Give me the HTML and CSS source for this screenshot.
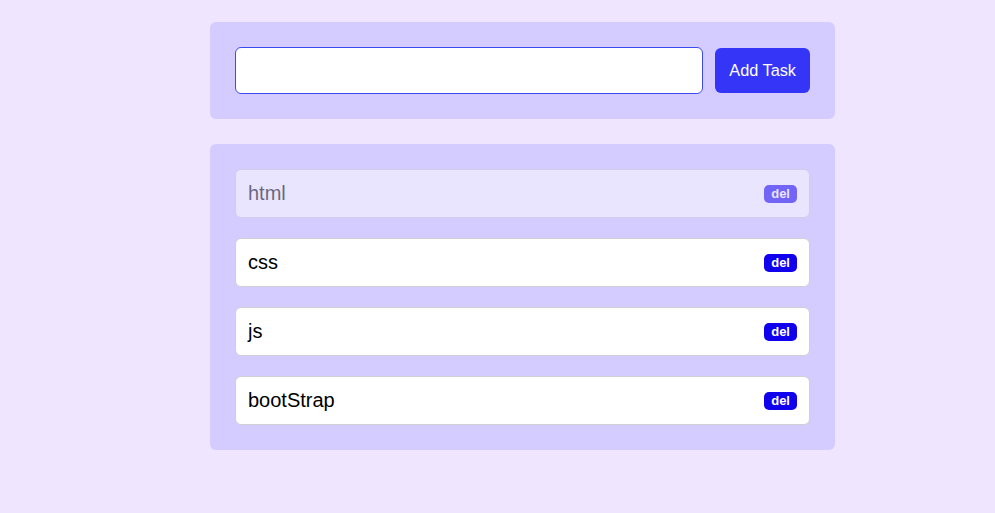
FILE: index.html
```html
<!DOCTYPE html>
<html>
<head>
<meta charset="utf-8">
<link rel="stylesheet" href="styles.css">
</head>
<body>
<div class="app">
  <div class="card form-card">
    <input class="task-input" type="text">
    <button class="add-btn">Add Task</button>
  </div>
  <div class="card list-card">
    <div class="item done"><span class="label">html</span><span class="del">del</span></div>
    <div class="item"><span class="label">css</span><span class="del">del</span></div>
    <div class="item"><span class="label">js</span><span class="del">del</span></div>
    <div class="item"><span class="label">bootStrap</span><span class="del">del</span></div>
  </div>
</div>
</body>
</html>
```
FILE: styles.css
```css
html, body {
  margin: 0;
  padding: 0;
  background: #efe5ff;
  font-family: "Liberation Sans", Arial, sans-serif;
}
.app {
  width: 625px;
  margin: 22px 0 0 210px;
  display: flex;
  flex-direction: column;
  gap: 25px;
}
.card {
  background: #d4cbff;
  border-radius: 6px;
  padding: 25px;
}
.form-card {
  display: flex;
  align-items: center;
  gap: 12px;
}
.task-input {
  flex: 1;
  height: 47px;
  box-sizing: border-box;
  border: 1px solid #3a4cf0;
  border-radius: 6px;
  background: #fff;
  font-family: inherit;
  font-size: 18px;
  padding: 0 12px;
  outline: none;
}
.add-btn {
  height: 45px;
  padding: 0 14px;
  border: none;
  border-radius: 6px;
  background: #3535f8;
  color: #fff;
  font-family: inherit;
  font-size: 16.3px;
}
.list-card {
  display: flex;
  flex-direction: column;
  gap: 20px;
}
.item {
  display: flex;
  align-items: center;
  justify-content: space-between;
  background: #fff;
  border: 1px solid #cfcfd6;
  border-radius: 6px;
  padding: 12px;
  height: 23px;
}
.label {
  font-size: 20px;
  line-height: 23px;
  color: #000;
}
.del {
  background: #1100ee;
  color: #fff;
  font-weight: bold;
  font-size: 13px;
  line-height: 18px;
  padding: 0 7px;
  border-radius: 5px;
}
.item.done {
  opacity: 0.5;
}
```
